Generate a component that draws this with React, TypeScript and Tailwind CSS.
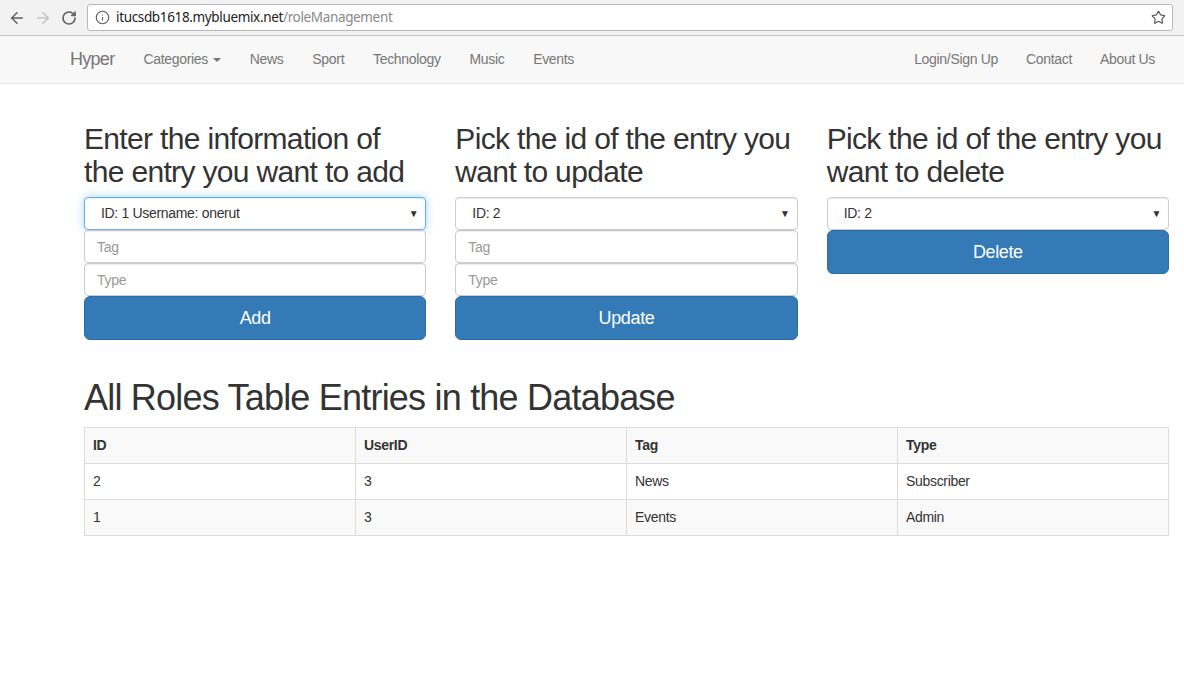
import React from "react";
import { ArrowLeft, ArrowRight, RotateCw, Info, Star } from "lucide-react";

const navLeft = ["News", "Sport", "Technology", "Music", "Events"];
const navRight = ["Login/Sign Up", "Contact", "About Us"];

const rows = [
  { id: "2", userId: "3", tag: "News", type: "Subscriber" },
  { id: "1", userId: "3", tag: "Events", type: "Admin" },
];

function FakeSelect({ label, focused }: { label: string; focused?: boolean }) {
  return (
    <div
      className={
        "flex h-[33px] items-center justify-between rounded-[4px] border bg-white pl-[16px] pr-[7px] text-[14px] text-[#555] " +
        (focused
          ? "border-[#66afe9] shadow-[inset_0_1px_1px_rgba(0,0,0,.075),0_0_8px_rgba(102,175,233,.6)]"
          : "border-[#ccc] shadow-[inset_0_1px_1px_rgba(0,0,0,.075)]")
      }
    >
      <span className="text-[#333]">{label}</span>
      <span className="text-[10px] text-[#333]">▼</span>
    </div>
  );
}

function Field({ placeholder }: { placeholder: string }) {
  return (
    <input
      type="text"
      placeholder={placeholder}
      className="h-[33px] w-full rounded-[4px] border border-[#ccc] bg-white px-[12px] text-[14px] tracking-[-0.02em] text-[#555] outline-none shadow-[inset_0_1px_1px_rgba(0,0,0,.075)] placeholder:text-[#999]"
    />
  );
}

function BigButton({ children }: { children: React.ReactNode }) {
  return (
    <button className="h-[44px] w-full rounded-[6px] border border-[#2e6da4] bg-[#337ab7] text-[18px] tracking-[-0.02em] text-white">
      {children}
    </button>
  );
}

export default function App() {
  return (
    <div className="min-h-[692px] bg-white font-['Liberation_Sans',Arial,sans-serif] tracking-[-0.02em] text-[#333]">
      {/* browser chrome */}
      <div className="flex h-[36px] items-center border-b border-[#c6c6c6] bg-[#f2f2f2] pl-[8px] pr-[11px] tracking-normal">
        <ArrowLeft className="h-[18px] w-[18px] text-[#5f5f5f]" strokeWidth={2} />
        <ArrowRight className="ml-[8px] h-[18px] w-[18px] text-[#c4c4c4]" strokeWidth={2} />
        <RotateCw className="ml-[9px] h-[16px] w-[16px] text-[#5f5f5f]" strokeWidth={2.4} />
        <div className="ml-[10px] flex h-[27px] flex-1 items-center rounded-[3px] border border-[#b9b9b9] bg-white pl-[7px] pr-[6px]">
          <Info className="h-[15px] w-[15px] text-[#5a5a5a]" strokeWidth={1.8} />
          <span className="ml-[6px] font-['Noto_Sans',sans-serif] text-[13.5px] tracking-[-0.35px] text-[#222]">
            itucsdb1618.mybluemix.net<span className="text-[#888]">/roleManagement</span>
          </span>
          <Star className="ml-auto h-[15px] w-[15px] text-[#555]" strokeWidth={1.8} />
        </div>
      </div>

      {/* navbar */}
      <nav className="flex h-[48px] items-center justify-between border-b border-[#e7e7e7] bg-[#f8f8f8] pl-[55px] pr-[15px] text-[14px] text-[#777]">
        <div className="flex items-center">
          <span className="pl-[15px] pr-[14.5px] text-[18px] tracking-[-0.04em]">Hyper</span>
          <span className="flex items-center px-[14.5px]">
            Categories
            <span className="ml-[5px] inline-block h-0 w-0 border-x-[4px] border-t-[4px] border-x-transparent border-t-[#777]" />
          </span>
          {navLeft.map((n) => (
            <span key={n} className="px-[14.4px]">
              {n}
            </span>
          ))}
        </div>
        <div className="flex items-center">
          {navRight.map((n) => (
            <span key={n} className="px-[14px]">
              {n}
            </span>
          ))}
        </div>
      </nav>

      {/* main */}
      <div className="pl-[84px] pr-[15px] pt-[38px]">
        <div className="grid grid-cols-3 gap-x-[29px]">
          <div>
            <h2 className="mb-[9px] text-[30px] leading-[33px] tracking-[-0.022em]">
              Enter the information of
              <br />
              the entry you want to add
            </h2>
            <FakeSelect label="ID: 1 Username: onerut" focused />
            <Field placeholder="Tag" />
            <Field placeholder="Type" />
            <BigButton>Add</BigButton>
          </div>
          <div>
            <h2 className="mb-[9px] text-[30px] leading-[33px] tracking-[-0.022em]">
              Pick the id of the entry you
              <br />
              want to update
            </h2>
            <FakeSelect label="ID: 2" />
            <Field placeholder="Tag" />
            <Field placeholder="Type" />
            <BigButton>Update</BigButton>
          </div>
          <div>
            <h2 className="mb-[9px] text-[30px] leading-[33px] tracking-[-0.022em]">
              Pick the id of the entry you
              <br />
              want to delete
            </h2>
            <FakeSelect label="ID: 2" />
            <BigButton>Delete</BigButton>
          </div>
        </div>

        <h1 className="mt-[38px] mb-[9px] text-[36px] leading-[40px] tracking-[-0.022em]">
          All Roles Table Entries in the Database
        </h1>
        <table className="w-full table-fixed border-collapse text-[14px]">
          <thead>
            <tr className="bg-[#f9f9f9]">
              {["ID", "UserID", "Tag", "Type"].map((h) => (
                <th key={h} className="h-[36px] border border-[#ddd] px-[8px] text-left font-bold">
                  {h}
                </th>
              ))}
            </tr>
          </thead>
          <tbody>
            {rows.map((r, i) => (
              <tr key={r.id} className={i % 2 === 1 ? "bg-[#f9f9f9]" : "bg-white"}>
                <td className="h-[36px] border border-[#ddd] px-[8px]">{r.id}</td>
                <td className="border border-[#ddd] px-[8px]">{r.userId}</td>
                <td className="border border-[#ddd] px-[8px]">{r.tag}</td>
                <td className="border border-[#ddd] px-[8px]">{r.type}</td>
              </tr>
            ))}
          </tbody>
        </table>
      </div>
    </div>
  );
}
